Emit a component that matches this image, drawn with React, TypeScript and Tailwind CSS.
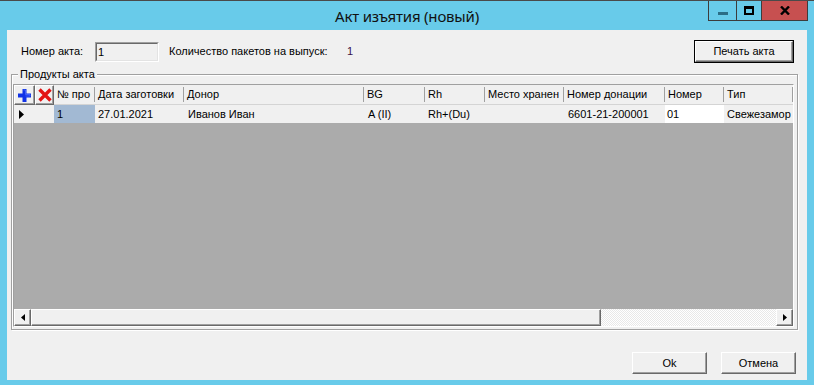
import React from "react";

const font = { fontFamily: '"Liberation Sans", Arial, sans-serif' };

function Raised({ className = "", children }: { className?: string; children?: React.ReactNode }) {
  return (
    <div
      className={`border border-t-white border-l-white border-r-[#696969] border-b-[#696969] bg-[#f0f0f0] shadow-[inset_-1px_-1px_0_#a0a0a0] ${className}`}
    >
      {children}
    </div>
  );
}

const cols = [
  { w: 21, h: "" },
  { w: 19, h: "" },
  { w: 41, h: "№ про" },
  { w: 89, h: "Дата заготовки" },
  { w: 180, h: "Донор" },
  { w: 61, h: "BG" },
  { w: 60, h: "Rh" },
  { w: 79, h: "Место хранен" },
  { w: 101, h: "Номер донации" },
  { w: 59, h: "Номер" },
  { w: 69, h: "Тип" },
];

export default function App() {
  return (
    <div
      className="w-[814px] h-[385px] bg-[#68cbea] border-t border-t-[#4a4a4a] flex flex-col overflow-hidden text-[11px] text-black"
      style={font}
    >
      {/* title bar */}
      <div className="relative h-[29px] shrink-0 flex items-center justify-center">
        <div
          className="text-[15px] text-[#111] pt-[2px]"
          style={{ fontFamily: '"Noto Sans", "Open Sans", sans-serif', letterSpacing: "-0.2px" }}
        >
          Акт изъятия (новый)
        </div>
        <div className="absolute right-[6px] top-[-1px] flex h-[21px] border border-[#3c3c3c] border-t-0">
          <div className="w-[28px] flex items-end justify-center pb-[5px] border-r border-[#3c3c3c]">
            <div className="w-[10px] h-[3px] bg-[#2b6d86]" />
          </div>
          <div className="w-[25px] flex items-center justify-center border-r border-[#3c3c3c]">
            <div className="w-[10px] h-[9px] border-2 border-t-[3px] border-black" />
          </div>
          <div className="w-[45px] bg-[#c75050] flex items-center justify-center">
            <svg width="10" height="9" viewBox="0 0 10 9">
              <path d="M1 0.5 L9 8.5 M9 0.5 L1 8.5" stroke="#000" strokeWidth="2.4" />
            </svg>
          </div>
        </div>
      </div>

      {/* client */}
      <div className="ml-[7px] w-[800px] h-[350px] bg-[#f0f0f0] flex flex-col">
        {/* top row */}
        <div className="mt-[10px] h-[23px] flex items-center pl-[14px] pr-[13px]">
          <div className="w-[74px]">Номер акта:</div>
          <div className="w-[64px] h-[20px] border border-t-[#a0a0a0] border-l-[#a0a0a0] border-r-white border-b-white">
            <div className="h-full border border-t-[#696969] border-l-[#696969] border-r-[#e3e3e3] border-b-[#e3e3e3] bg-[#f0f0f0] pl-[1px] leading-[16px]">
              1
            </div>
          </div>
          <div className="ml-[10px] w-[178px]">Количество пакетов на выпуск:</div>
          <div className="text-[#3a1048]">1</div>
          <div className="ml-auto w-[100px] h-[23px] border border-black">
            <Raised className="h-full flex items-center justify-center">Печать акта</Raised>
          </div>
        </div>

        {/* group box */}
        <fieldset className="mt-[5px] ml-[4px] mr-[9px] border border-[#a0a0a0] shadow-[inset_1px_1px_0_#fff,1px_1px_0_#fff] flex flex-col">
          <legend className="ml-[6px] px-[2px] leading-[13px] bg-[#f0f0f0]">Продукты акта</legend>
          <div className="mt-[3px] mb-[2px] ml-[1px] w-[781px] h-[243px] border border-t-[#a0a0a0] border-l-[#a0a0a0] border-r-white border-b-white flex flex-col">
            {/* header */}
            <div className="h-[20px] flex shrink-0 bg-[#f0f0f0]">
              <Raised className="w-[21px] h-[20px] flex items-center justify-center">
                <svg width="13" height="13" viewBox="0 0 13 13">
                  <path d="M4.5 0 H8.5 V4.5 H13 V8.5 H8.5 V13 H4.5 V8.5 H0 V4.5 H4.5 Z" fill="#1133e6" />
                  <path d="M5.5 1 H7.5 V5.5 H12 V7 H7.5" fill="none" stroke="#4d6cff" strokeWidth="0.8" />
                </svg>
              </Raised>
              <Raised className="w-[19px] h-[20px] flex items-center justify-center">
                <svg width="14" height="14" viewBox="0 0 14 14">
                  <path d="M1.5 1.5 L12.5 12.5 M12.5 1.5 L1.5 12.5" stroke="#e31313" strokeWidth="3.4" />
                </svg>
              </Raised>
              {cols.slice(2).map((c, i) => (
                <div
                  key={i}
                  className="h-[20px] flex items-center pl-[3px] border-b border-[#d4d4d4] overflow-hidden whitespace-nowrap relative"
                  style={{ width: c.w }}
                >
                  <div className="absolute right-0 top-[2px] bottom-[2px] w-px bg-[#a0a0a0]" />
                  {c.h}
                </div>
              ))}
            </div>
            {/* data row */}
            <div className="h-[18px] flex shrink-0 bg-[#f0f0f0]">
              <div className="w-[40px] flex items-center pl-[5px]">
                <svg width="5" height="9" viewBox="0 0 5 9">
                  <path d="M0 0 L5 4.5 L0 9 Z" fill="#000" />
                </svg>
              </div>
              <div className="w-[41px] bg-[#a2b9d3] pl-[3px] leading-[18px]">1</div>
              <div className="w-[89px] pl-[3px] leading-[18px]">27.01.2021</div>
              <div className="w-[180px] pl-[4px] leading-[18px]">Иванов Иван</div>
              <div className="w-[61px] pl-[4px] leading-[18px]">A (II)</div>
              <div className="w-[60px] pl-[3px] leading-[18px]">Rh+(Du)</div>
              <div className="w-[79px] leading-[18px]" />
              <div className="w-[101px] pl-[4px] leading-[18px]">6601-21-200001</div>
              <div className="w-[59px] bg-white pl-[2px] leading-[18px]">01</div>
              <div className="w-[69px] pl-[3px] leading-[18px] overflow-hidden whitespace-nowrap">Свежезамор</div>
            </div>
            {/* empty area */}
            <div className="flex-1 bg-[#ababab]" />
            {/* scrollbar */}
            <div className="h-[17px] flex shrink-0">
              <Raised className="w-[17px] h-[17px] flex items-center justify-center">
                <svg width="4" height="7" viewBox="0 0 4 7">
                  <path d="M4 0 L0 3.5 L4 7 Z" fill="#000" />
                </svg>
              </Raised>
              <Raised className="w-[570px] h-[17px]" />
              <div className="flex-1 bg-[repeating-conic-gradient(#ffffff_0_25%,#e8e8e8_0_50%)] bg-[length:2px_2px]" />
              <Raised className="w-[17px] h-[17px] flex items-center justify-center">
                <svg width="4" height="7" viewBox="0 0 4 7">
                  <path d="M0 0 L4 3.5 L0 7 Z" fill="#000" />
                </svg>
              </Raised>
            </div>
          </div>
        </fieldset>

        {/* bottom buttons */}
        <div className="mt-auto mb-[6px] flex justify-end gap-[14px] pr-[11px]">
          <Raised className="w-[75px] h-[22px] flex items-center justify-center">Ok</Raised>
          <Raised className="w-[75px] h-[22px] flex items-center justify-center">Отмена</Raised>
        </div>
      </div>
    </div>
  );
}
